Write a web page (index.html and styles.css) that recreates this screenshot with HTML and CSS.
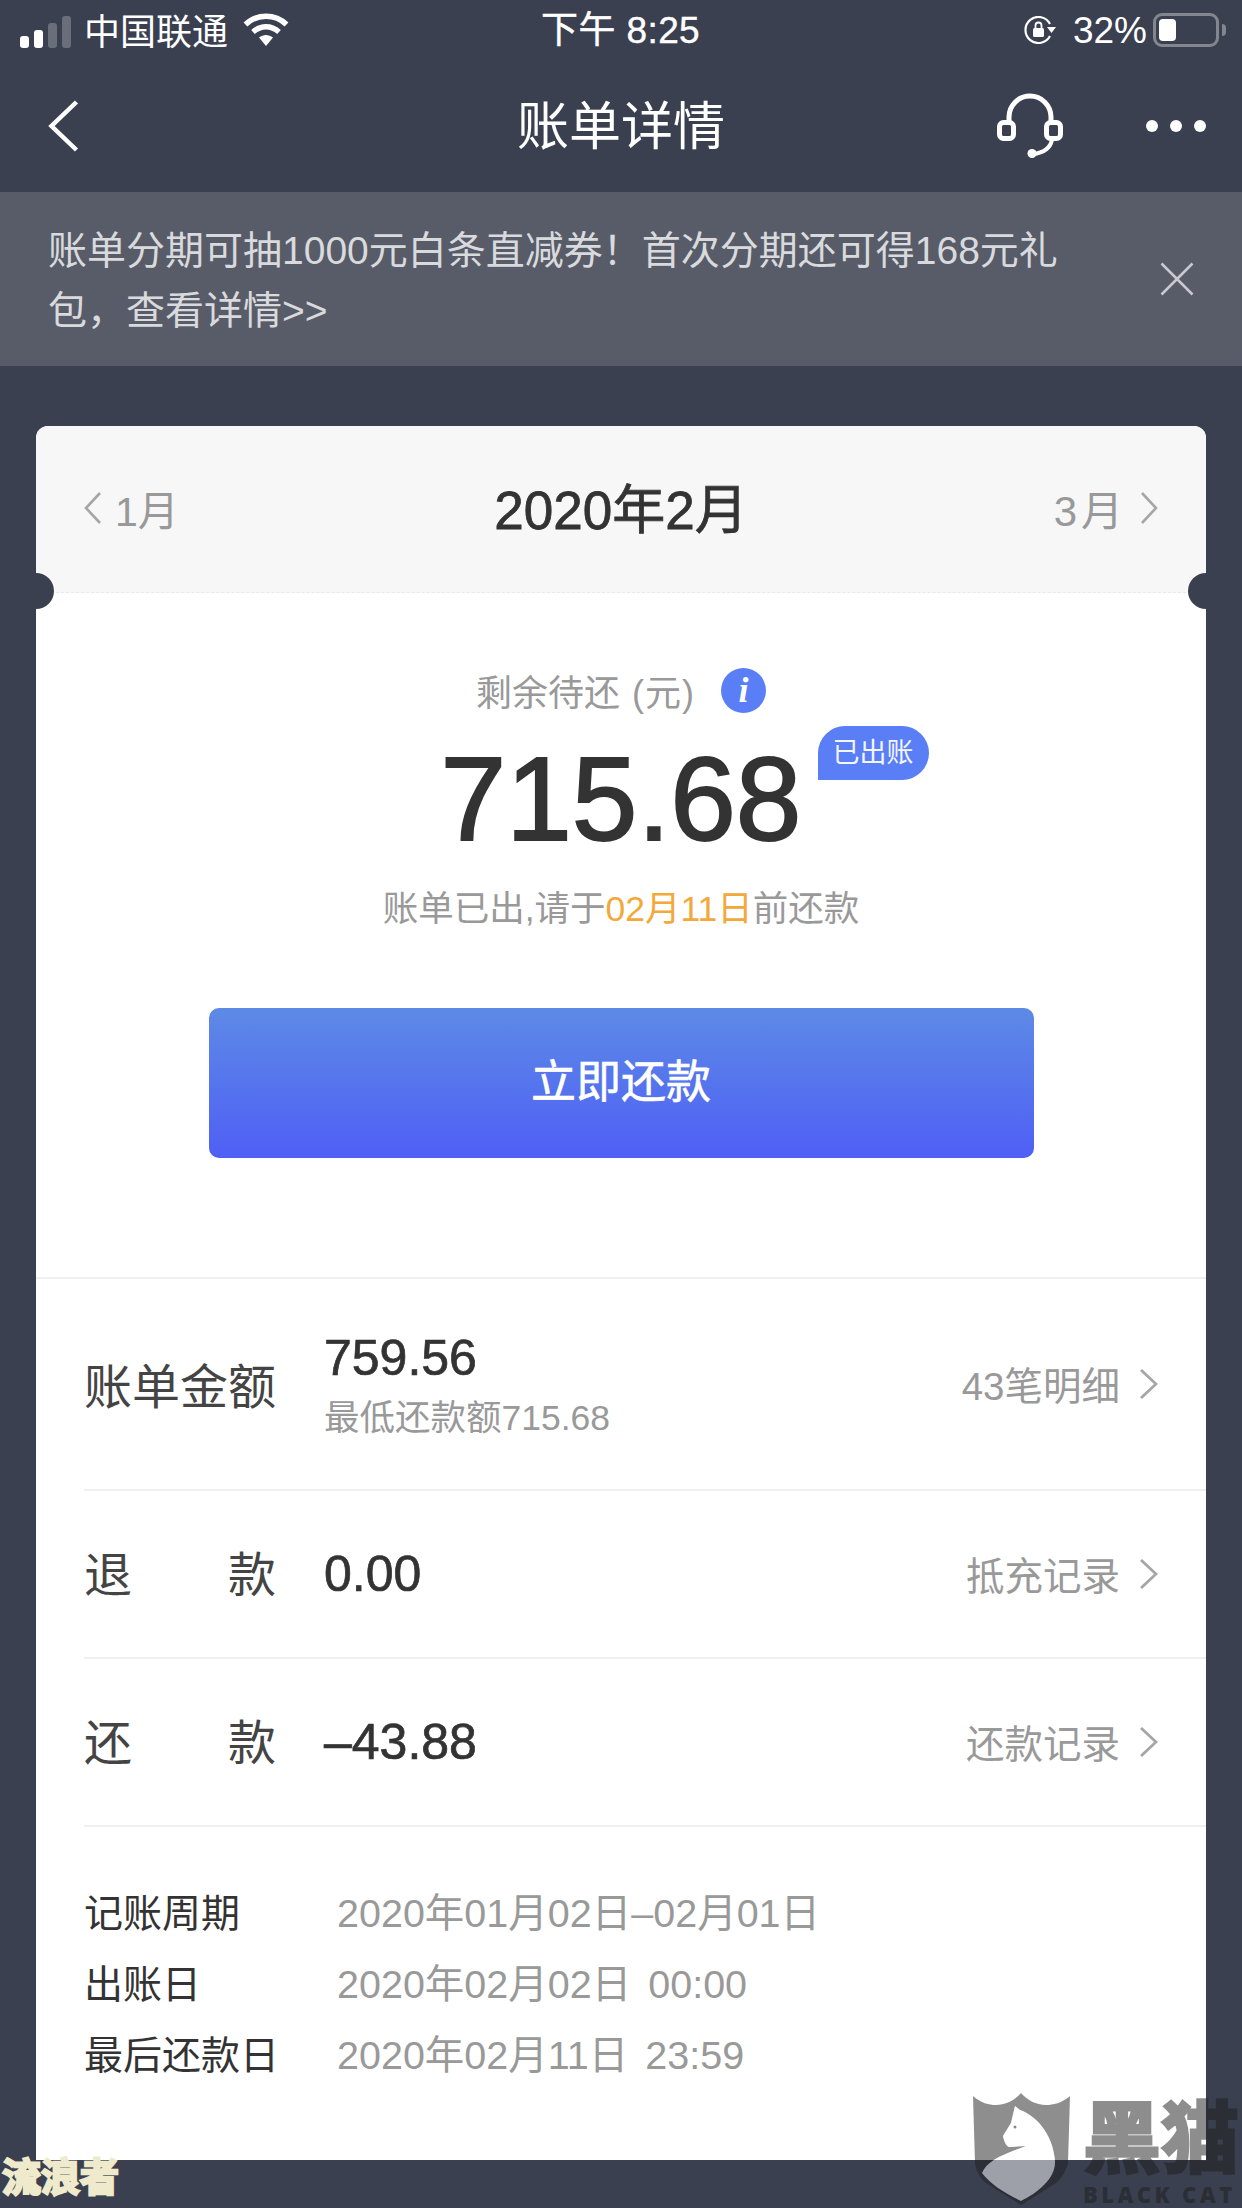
FILE: index.html
```html
<!DOCTYPE html>
<html lang="zh-CN">
<head>
  <meta charset="UTF-8">
  <title>账单详情</title>
  <link rel="stylesheet" href="styles.css">
</head>
<body>
<div class="page">
  <div class="status-bar">
    <div class="status-left">
      <div class="signal">
        <span class="bar bar-1"></span>
        <span class="bar bar-2"></span>
        <span class="bar bar-3"></span>
        <span class="bar bar-4"></span>
      </div>
      <span class="carrier">中国联通</span>
      <svg class="wifi" viewBox="0 0 46 33">
        <path d="M2.5 11.5C14 .5 32 .5 43.5 11.5" fill="none" stroke="#fff" stroke-width="5.5"/>
        <path d="M10 19c8-7 18-7 26 0" fill="none" stroke="#fff" stroke-width="5.5"/>
        <path d="M16 24.5c4.500-3.500 9.500-3.500 14 0L23 33z" fill="#fff"/>
      </svg>
    </div>
    <div class="status-time">下午 8:25</div>
    <div class="status-right">
      <svg class="rotate-lock" viewBox="0 0 32 28">
        <path d="M26 20A13 13 0 1 1 26 8" fill="none" stroke="#fff" stroke-width="2.200"/>
        <path d="M23 11h9l-4.500 6z" fill="#fff"/>
        <rect x="9" y="12" width="11" height="9" rx="1.500" fill="#fff"/>
        <path d="M11.500 12V9.500a3 3 0 0 1 6 0V12" fill="none" stroke="#fff" stroke-width="1.800"/>
      </svg>
      <span class="battery-pct">32%</span>
      <div class="battery">
        <div class="battery-fill"></div>
      </div>
      <div class="battery-nub"></div>
    </div>
  </div>

  <div class="nav-bar">
    <svg class="nav-back" viewBox="0 0 31 52">
      <path d="M28.500 2L3.500 26l25 24" fill="none" stroke="#fff" stroke-width="4.500"/>
    </svg>
    <div class="nav-title">账单详情</div>
    <svg class="nav-headset" viewBox="0 0 66 65">
      <path d="M12 30V24a21 21 0 0 1 42 0v6" fill="none" stroke="#fff" stroke-width="5"/>
      <rect x="2.500" y="29.500" width="14" height="16" rx="4" fill="none" stroke="#fff" stroke-width="5"/>
      <rect x="49.500" y="29.500" width="14" height="16" rx="4" fill="none" stroke="#fff" stroke-width="5"/>
      <path d="M55 47c-2 9-10 13-19 14" fill="none" stroke="#fff" stroke-width="4"/>
      <circle cx="35" cy="60.500" r="4.500" fill="#fff"/>
    </svg>
    <div class="nav-more">
      <span class="dot"></span>
      <span class="dot"></span>
      <span class="dot"></span>
    </div>
  </div>

  <div class="banner">
    <div class="banner-text">账单分期可抽1000元白条直减券！首次分期还可得168元礼<br>包，查看详情&gt;&gt;</div>
    <svg class="banner-close" viewBox="0 0 34 34">
      <path d="M1.500 1.500l31 31M32.500 1.500l-31 31" fill="none" stroke="#c9cad0" stroke-width="2.500"/>
    </svg>
  </div>

  <div class="main">
    <div class="card">
      <div class="notch notch-left"></div>
      <div class="notch notch-right"></div>

      <div class="month-bar">
        <div class="month-side">
          <svg class="chev" viewBox="0 0 17 32"><path d="M16 1L2 16l14 15" fill="none" stroke="#a6a6a6" stroke-width="2.600"/></svg>
          <span>1月</span>
        </div>
        <div class="month-now">2020年2月</div>
        <div class="month-side month-side-right">
          <span class="month-next">3月</span>
          <svg class="chev" viewBox="0 0 17 32"><path d="M1 1l14 15L1 31" fill="none" stroke="#a6a6a6" stroke-width="2.600"/></svg>
        </div>
      </div>

      <div class="summary">
        <div class="remain-label">
          <span>剩余待还</span>
          <span class="remain-unit">(元)</span>
          <span class="info-icon">i</span>
        </div>
        <div class="amount">715.68<span class="badge">已出账</span></div>
        <div class="due-note">账单已出,请于<span class="due-date">02月11日</span>前还款</div>
        <div class="pay-btn">立即还款</div>
      </div>

      <div class="bill-row bill-row-tall">
        <div class="bill-label">账单金额</div>
        <div class="bill-value">
          <div class="bill-num">759.56</div>
          <div class="bill-min">最低还款额715.68</div>
        </div>
        <div class="bill-link">
          <span>43笔明细</span>
          <svg class="row-chev" viewBox="0 0 18 30"><path d="M1 1l15 14L1 29" fill="none" stroke="#a6a6a6" stroke-width="2.800"/></svg>
        </div>
      </div>
      <div class="bill-row">
        <div class="bill-label bill-label-spread"><span>退</span><span>款</span></div>
        <div class="bill-value">
          <div class="bill-num">0.00</div>
        </div>
        <div class="bill-link">
          <span>抵充记录</span>
          <svg class="row-chev" viewBox="0 0 18 30"><path d="M1 1l15 14L1 29" fill="none" stroke="#a6a6a6" stroke-width="2.800"/></svg>
        </div>
      </div>
      <div class="bill-row">
        <div class="bill-label bill-label-spread"><span>还</span><span>款</span></div>
        <div class="bill-value">
          <div class="bill-num">–43.88</div>
        </div>
        <div class="bill-link">
          <span>还款记录</span>
          <svg class="row-chev" viewBox="0 0 18 30"><path d="M1 1l15 14L1 29" fill="none" stroke="#a6a6a6" stroke-width="2.800"/></svg>
        </div>
      </div>

      <div class="details">
        <div class="detail-label">记账周期</div>
        <div class="detail-value">2020年01月02日–02月01日</div>
        <div class="detail-label">出账日</div>
        <div class="detail-value">2020年02月02日 00:00</div>
        <div class="detail-label">最后还款日</div>
        <div class="detail-value">2020年02月11日 23:59</div>
      </div>
    </div>
  </div>

  <div class="mark-left">流浪者</div>
  <div class="mark-right">
    <svg class="mark-shield" viewBox="0 0 97 112">
      <path fill-rule="evenodd" fill="rgba(30,30,30,.5)" d="M0 3C8 10 16 12 23 12 33 12 42 7 48 0 54 7 63 12 73 12 80 12 89 10 97 3L95 70C93 78 89 85 83 90L48 112 13 90C7 85 3 78 2 70ZM42 13L47 17C62 22 80 40 82 68 83 85 65 100 48 108 32 100 18 92 9 80 14 68 28 62 53 53L36 54C33 53 31 48 30 43L38 30Z"/>
      <path fill="rgba(255,255,255,.5)" d="M42 13L47 17C62 22 80 40 82 68 83 85 65 100 48 108 32 100 18 92 9 80 14 68 28 62 53 53L36 54C33 53 31 48 30 43L38 30Z"/>
      <circle cx="42" cy="34" r="1.500" fill="#888"/>
    </svg>
    <div class="mark-words">
      <div class="mark-cn">黑猫</div>
      <div class="mark-en">BLACK CAT</div>
    </div>
  </div>
</div>
</body>
</html>
```

FILE: styles.css
```css
* {
  box-sizing: border-box;
}
body {
  margin: 0;
  background: #3b4050;
  font-family: "Liberation Sans", "Noto Sans CJK SC", sans-serif;
}
.page {
  width: 1242px;
  height: 2208px;
  position: relative;
  overflow: hidden;
  background: #3b4050;
}

/* status bar */
.status-bar {
  height: 60px;
  display: flex;
  align-items: center;
  justify-content: space-between;
  padding: 0 16px 0 20px;
  color: #fff;
  position: relative;
}
.status-left,
.status-right {
  display: flex;
  align-items: center;
}
.signal {
  display: flex;
  align-items: flex-end;
  gap: 5px;
  height: 32px;
  margin-top: 3px;
}
.bar {
  width: 9px;
  border-radius: 3px;
  background: #fff;
}
.bar-1 { height: 12px; }
.bar-2 { height: 18px; }
.bar-3 { height: 25px; background: #6a6e7b; }
.bar-4 { height: 32px; background: #6a6e7b; }
.carrier {
  font-size: 36px;
  margin-left: 13px;
  margin-bottom: 3px;
}
.wifi {
  width: 46px;
  height: 33px;
  margin-left: 15px;
  margin-top: -1px;
}
.status-time {
  position: absolute;
  left: 541px;
  top: 6px;
  line-height: 50px;
  font-size: 37px;
  letter-spacing: 0.4px;
  -webkit-text-stroke: 0.4px #fff;
}
.rotate-lock {
  width: 32px;
  height: 28px;
  margin-right: 17px;
}
.battery-pct {
  font-size: 37px;
  font-weight: 400;
  margin-right: 6px;
  margin-top: 2px;
}
.battery {
  width: 66px;
  height: 34px;
  border: 3px solid #83868f;
  border-radius: 9px;
  padding: 3px;
}
.battery-fill {
  width: 17px;
  height: 22px;
  border-radius: 4px;
  background: #fff;
}
.battery-nub {
  width: 4px;
  height: 12px;
  margin-left: 3px;
  border-radius: 0 4px 4px 0;
  background: #83868f;
}

/* nav bar */
.nav-bar {
  height: 132px;
  display: flex;
  align-items: center;
  position: relative;
  padding: 0 36px 0 48px;
}
.nav-back {
  width: 31px;
  height: 52px;
}
.nav-title {
  position: absolute;
  left: 0;
  right: 0;
  top: 39px;
  line-height: 56px;
  text-align: center;
  font-size: 52px;
  color: #fff;
}
.nav-headset {
  width: 66px;
  height: 65px;
  margin-left: auto;
  margin-top: -2px;
}
.nav-more {
  display: flex;
  gap: 12px;
  margin-left: 83px;
}
.dot {
  width: 12px;
  height: 12px;
  border-radius: 50%;
  background: #fff;
}

/* promo banner */
.banner {
  height: 174px;
  background: #585c68;
  display: flex;
  align-items: center;
  justify-content: space-between;
  padding: 0 48px;
}
.banner-text {
  font-size: 39px;
  line-height: 60px;
  color: #d9dadd;
  margin-top: 3px;
}
.banner-close {
  width: 34px;
  height: 34px;
}

/* bill card */
.main {
  padding: 60px 36px 0;
}
.card {
  background: #fff;
  border-radius: 12px 12px 0 0;
  position: relative;
}
.notch {
  position: absolute;
  top: 147px;
  width: 36px;
  height: 36px;
  border-radius: 50%;
  background: #3b4050;
}
.notch-left { left: -18px; }
.notch-right { right: -18px; }

.month-bar {
  height: 167px;
  background: #f7f7f7;
  border-radius: 12px 12px 0 0;
  border-bottom: 1px dashed #e9e9e9;
  display: flex;
  align-items: center;
  padding: 0 48px 3px;
}
.month-side {
  flex: 1;
  display: flex;
  align-items: center;
  gap: 14px;
  font-size: 41px;
  color: #999;
}
.month-side-right {
  justify-content: flex-end;
}
.month-next {
  font-size: 42px;
  letter-spacing: 4px;
}
.chev {
  width: 17px;
  height: 32px;
}
.month-now {
  font-size: 53px;
  padding-bottom: 4px;
  color: #333;
  -webkit-text-stroke: 0.8px #333;
}

.summary {
  height: 686px;
  padding-top: 72px;
  border-bottom: 2px solid #f0f0f0;
  display: flex;
  flex-direction: column;
  align-items: center;
}
.remain-label {
  display: flex;
  align-items: center;
  height: 50px;
  font-size: 36px;
  color: #999;
}
.remain-unit {
  margin-left: 12px;
  letter-spacing: 1px;
}
.info-icon {
  width: 45px;
  height: 45px;
  margin-left: 26px;
  border-radius: 50%;
  background: #5a7ef5;
  color: #fff;
  font-family: "Liberation Serif", serif;
  font-style: italic;
  font-weight: 700;
  font-size: 36px;
  line-height: 45px;
  text-align: center;
}
.amount {
  position: relative;
  margin-top: 19px;
  font-size: 118px;
  line-height: 130px;
  color: #333;
  -webkit-text-stroke: 2px #333;
}
.badge {
  position: absolute;
  left: 377px;
  top: -8px;
  width: 111px;
  height: 54px;
  border-radius: 27px 27px 27px 0;
  background: #5a7ef5;
  color: #f4f6ff;
  font-size: 27px;
  line-height: 54px;
  text-align: center;
  -webkit-text-stroke: 0;
}
.due-note {
  margin-top: 20px;
  font-size: 35.500px;
  line-height: 50px;
  color: #999;
}
.due-date {
  color: #f3a83c;
}
.pay-btn {
  margin-top: 74px;
  width: 825px;
  height: 150px;
  border-radius: 10px;
  background: linear-gradient(#5d8ae6, #4f5ff5);
  color: #fff;
  font-size: 45px;
  line-height: 150px;
  text-align: center;
  -webkit-text-stroke: 0.6px #fff;
}

.bill-row {
  height: 168px;
  margin-left: 48px;
  padding-right: 48px;
  border-bottom: 2px solid #f0f0f0;
  display: flex;
  align-items: center;
}
.bill-row-tall {
  height: 212px;
}
.bill-label {
  width: 192px;
  font-size: 48px;
  line-height: 60px;
  padding-top: 7px;
  color: #444;
}
.bill-label-spread {
  display: flex;
  justify-content: space-between;
  padding-top: 3px;
}
.bill-value {
  margin-left: 48px;
}
.bill-num {
  font-size: 50px;
  line-height: 60px;
  color: #333;
  -webkit-text-stroke: 0.7px #333;
}
.bill-min {
  font-size: 35.500px;
  line-height: 44px;
  margin-top: 8px;
  color: #999;
}
.bill-link {
  margin-left: auto;
  display: flex;
  align-items: center;
  gap: 20px;
  font-size: 38.500px;
  color: #999;
}
.bill-link span {
  margin-bottom: 3px;
}
.row-chev {
  width: 18px;
  height: 30px;
}

.details {
  padding: 47px 48px 73px;
  display: grid;
  grid-template-columns: 253px 1fr;
  grid-auto-rows: 71px;
  align-items: center;
}
.detail-label {
  font-size: 39px;
  color: #333;
}
.detail-value {
  font-size: 39.500px;
  word-spacing: 6px;
  color: #999;
}

/* watermarks over the screenshot */
.mark-left {
  position: absolute;
  left: 2px;
  top: 2156px;
  font-size: 39px;
  line-height: 44px;
  font-weight: 700;
  color: #efeacb;
  -webkit-text-stroke: 2.500px #efeacb;
}
.mark-right {
  position: absolute;
  left: 973px;
  top: 2093px;
  display: flex;
}
.mark-shield {
  width: 97px;
  height: 112px;
  flex-shrink: 0;
}
.mark-words {
  margin-left: 13px;
  color: #1e1e1e;
  opacity: 0.5;
  white-space: nowrap;
}
.mark-cn {
  font-size: 78px;
  line-height: 72px;
  font-weight: 700;
  margin-top: 11px;
  -webkit-text-stroke: 3px #1e1e1e;
}
.mark-en {
  font-family: "Open Sans", sans-serif;
  font-size: 22px;
  line-height: 22px;
  font-weight: 800;
  letter-spacing: 3.400px;
  margin-top: 7px;
}
```
